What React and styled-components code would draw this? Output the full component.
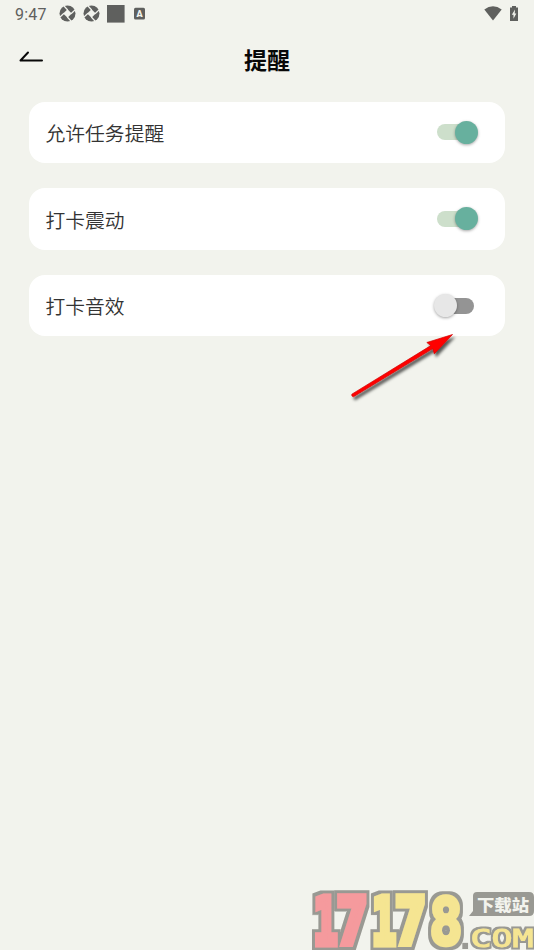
import React from "react";
import styled, { createGlobalStyle } from "styled-components";

const GlobalStyle = createGlobalStyle`
  * { box-sizing: border-box; }
  body { margin: 0; background: #f2f3ed; }
`;

const Screen = styled.main`
  position: relative;
  width: 534px;
  height: 950px;
  overflow: hidden;
  background: #f2f3ed;
  font-family: "Noto Sans CJK SC", sans-serif;
`;

const StatusBar = styled.div`
  display: flex;
  align-items: center;
  height: 27px;
  padding: 0 15.5px 0 15px;
  color: #5f605e;
`;

const Clock = styled.span`
  width: 43.5px;
  padding-top: 1px;
  font: 400 16px/27px Roboto, sans-serif;
  letter-spacing: 0.2px;
`;

const StatusIcons = styled.div`
  display: flex;
  flex: 1;
  align-items: center;
`;

const StatusIcon = styled.svg`
  display: block;
  flex: none;
  margin-left: ${(p) => p.$gap || 0}px;
`;

const Header = styled.header`
  display: grid;
  grid-template-columns: 60px 1fr 60px;
  align-items: center;
  height: 66px;
`;

const BackButton = styled.button`
  display: block;
  padding: 0;
  margin-left: 18px;
  width: 28px;
  height: 20px;
  border: 0;
  background: none;
`;

const Title = styled.h1`
  margin: 0;
  padding-bottom: 2px;
  text-align: center;
  font-size: 23px;
  line-height: 34px;
  font-weight: 700;
  color: #080808;
`;

const SettingList = styled.section`
  display: flex;
  flex-direction: column;
  gap: 25px;
  padding: 8.6px 29px 0 28.5px;
`;

const SettingRow = styled.div`
  display: flex;
  align-items: center;
  justify-content: space-between;
  height: 61.6px;
  padding: 0 26px 0 17px;
  border-radius: 16px;
  background: #fff;
`;

const Label = styled.span`
  padding-top: 1.4px;
  font-size: 19.8px;
  line-height: 30px;
  font-weight: 350;
  color: #333;
`;

const Switch = styled.button`
  display: flex;
  align-items: center;
  justify-content: ${(p) => (p.$on ? "flex-end" : "flex-start")};
  width: 37px;
  height: 16px;
  padding: 0;
  margin-right: 5px;
  border: 0;
  border-radius: 8px;
  background: ${(p) => (p.$on ? "#cddfcb" : "#949494")};
`;

const Thumb = styled.span`
  flex: none;
  width: 23px;
  height: 23px;
  margin: 0 ${(p) => (p.$on ? "-4px" : "0")} 0 ${(p) => (p.$on ? "0" : "-3px")};
  border-radius: 50%;
  background: ${(p) => (p.$on ? "#67b09e" : "#e7e7e7")};
  box-shadow: 0 1px 3px rgba(0, 0, 0, 0.35);
`;

const Pointer = styled.svg`
  position: absolute;
  left: 340px;
  top: 325px;
`;

const Watermark = styled.svg`
  position: absolute;
  left: 306px;
  top: 884px;
  overflow: visible;
`;

const Aperture = ({ gap }) => (
  <StatusIcon $gap={gap} width="17" height="17" viewBox="0 0 17 17">
    <circle cx="8.5" cy="8.5" r="8" fill="#5f605e" />
    <path d="M8.5 4.2 12.8 8.5 8.5 12.8 4.2 8.5Z" fill="#f2f3ed" />
    <path d="M5 1 8.7 5M16 5 12 8.7M12 16 8.3 12M1 12 5 8.3" stroke="#f2f3ed" strokeWidth="1.2" />
  </StatusIcon>
);

const settings = [
  { label: "允许任务提醒", on: true },
  { label: "打卡震动", on: true },
  { label: "打卡音效", on: false },
];

const PINK = "#f59a9d";
const YELLOW = "#f5e592";

const digits = [
  { char: "1", x: 7.5, width: 24, color: PINK, weight: 7 },
  { char: "7", x: 30.5, width: 31, color: PINK, weight: 7 },
  { char: "1", x: 66, width: 24, color: YELLOW, weight: 7 },
  { char: "7", x: 89, width: 31, color: YELLOW, weight: 7 },
  { char: "8", x: 123.5, width: 33, color: YELLOW, weight: 4.5 },
];

export default function App() {
  return (
    <Screen>
      <GlobalStyle />
      <StatusBar>
        <Clock>9:47</Clock>
        <StatusIcons>
          <Aperture />
          <Aperture gap={7.5} />
          <StatusIcon $gap={7} width="18" height="18"><path d="M0 0H17.6V17.6H0Z" fill="#5f605e" /></StatusIcon>
          <StatusIcon $gap={9} width="12" height="13" viewBox="0 0 12 13">
            <rect x="0" y="0.8" width="11" height="11.6" rx="1.5" fill="#5f605e" />
            <text x="5.5" y="9.9" textAnchor="middle" fontFamily="Roboto" fontWeight="900" fontSize="9" fill="#f2f3ed">A</text>
          </StatusIcon>
        </StatusIcons>
        <StatusIcon width="18" height="15" viewBox="0 0 18 15">
          <path d="M0.3 3.4Q9-2.8 17.7 3.4L9 14.5Z" fill="#5f605e" />
        </StatusIcon>
        <StatusIcon $gap={6.5} width="10" height="16" viewBox="0 0 10 16">
          <path d="M3 0H7V1.6H9V15H1V1.6H3Z" fill="#5f605e" />
          <path d="M6 3.5 2.8 8.8H4.5V12.8L7.3 7.5H5.7Z" fill="#f2f3ed" />
        </StatusIcon>
      </StatusBar>
      <Header>
        <BackButton aria-label="返回">
          <svg width="28" height="20" viewBox="0 0 28 20">
            <path d="M10 2.5 2.5 10.5H24" fill="none" stroke="#080808" strokeWidth="2" strokeLinecap="round" strokeLinejoin="round" />
          </svg>
        </BackButton>
        <Title>提醒</Title>
      </Header>
      <SettingList>
        {settings.map(({ label, on }) => (
          <SettingRow key={label}>
            <Label>{label}</Label>
            <Switch $on={on} role="switch" aria-checked={on} aria-label={label}><Thumb $on={on} /></Switch>
          </SettingRow>
        ))}
      </SettingList>
      <Pointer width="125" height="82" viewBox="0 0 125 82">
        <defs>
          <filter id="pointer-shadow" x="-20%" y="-20%" width="140%" height="150%">
            <feDropShadow dx="2" dy="3" stdDeviation="1.6" floodColor="#000" floodOpacity="0.65" />
          </filter>
        </defs>
        <path d="M11.8 69.2 90.8 20.6 86.8 17.5 112.5 9.5 94.3 28.8 92.8 23.6 13.4 71.8Q11.2 71.4 11.8 69.2Z" fill="#f00" stroke="#d00000" strokeWidth="0.7" filter="url(#pointer-shadow)" />
      </Pointer>
      <Watermark width="228" height="66" viewBox="0 0 228 66">
        <defs>
          <filter id="block-outline" filterUnits="userSpaceOnUse" x="0" y="0" width="230" height="70">
            <feMorphology in="SourceAlpha" operator="dilate" radius="3" result="grown" />
            <feFlood floodColor="#999993" />
            <feComposite in2="grown" operator="in" result="edge" />
            <feMerge><feMergeNode in="edge" /><feMergeNode in="SourceGraphic" /></feMerge>
          </filter>
          <filter id="thin-outline" filterUnits="userSpaceOnUse" x="150" y="35" width="80" height="40">
            <feMorphology in="SourceAlpha" operator="dilate" radius="2" result="grown" />
            <feFlood floodColor="#999993" />
            <feComposite in2="grown" operator="in" result="edge" />
            <feMerge><feMergeNode in="edge" /><feMergeNode in="SourceGraphic" /></feMerge>
          </filter>
        </defs>
        <g fontFamily="DejaVu Sans Mono" fontWeight="700" fontSize="64.5" strokeLinejoin="miter" filter="url(#block-outline)">
          {digits.map((d) => (
            <text key={d.x} x={d.x} y="59.5" textLength={d.width} lengthAdjust="spacingAndGlyphs" fill={d.color} stroke={d.color} strokeWidth={d.weight}>{d.char}</text>
          ))}
        </g>
        <path d="M171 8H223Q228 8 228 13V27Q228 32 223 32H163L167 27V12Q167 8 171 8Z" fill="#999993" />
        <text x="171" y="26.5" textLength="52" lengthAdjust="spacingAndGlyphs" fontFamily="Noto Sans CJK SC" fontWeight="900" fontSize="16" fill="#f2f3ed">下载站</text>
        <g fontFamily="DejaVu Sans Mono" fontWeight="400" fontSize="24.5" strokeWidth="1" filter="url(#thin-outline)">
          <text x="155" y="63" fill="#999993" fontSize="14">.</text>
          <text x="164.5" y="62.5" textLength="63" lengthAdjust="spacingAndGlyphs" fill={YELLOW} stroke={YELLOW}>COM</text>
        </g>
      </Watermark>
    </Screen>
  );
}
